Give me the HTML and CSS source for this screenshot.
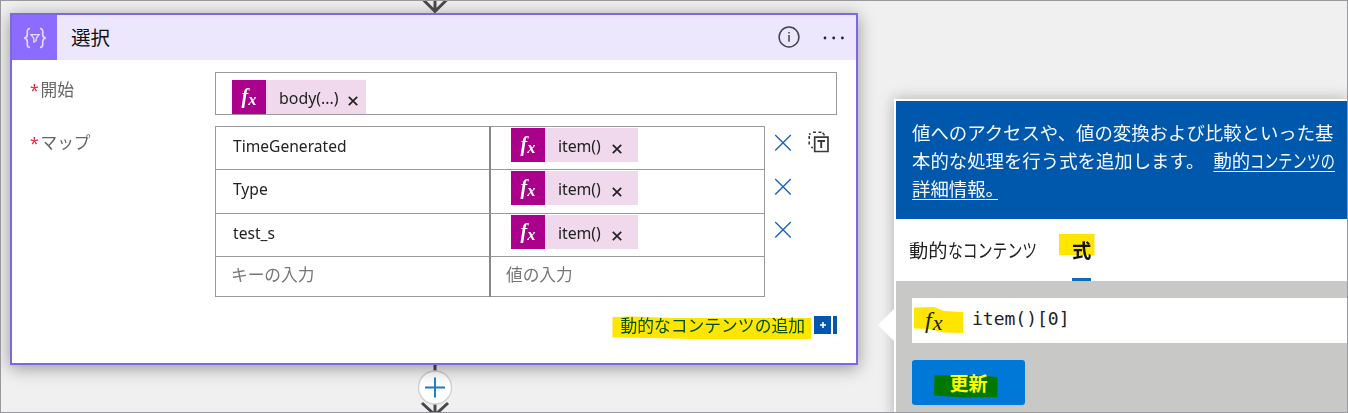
FILE: index.html
```
<!DOCTYPE html>
<html lang="ja">
<head>
<meta charset="utf-8">
<title>選択</title>
<link rel="stylesheet" href="styles.css">
</head>
<body>
<svg class="defs" width="0" height="0">
  <symbol id="cross" viewBox="0 0 18 18"><path d="M1 1L17 17M17 1L1 17" fill="none" stroke="currentColor" stroke-width="1.5"/></symbol>
  <symbol id="remove" viewBox="0 0 10 10"><path d="M.8 .8L9.2 9.2M9.2 .8L.8 9.2" fill="none" stroke="currentColor" stroke-width="1.7"/></symbol>
</svg>
<main class="canvas">
  <svg class="connector connector-top" width="28" height="13" viewBox="0 0 28 13"><path d="M14 0V10M2.500 -1L14 10.500L25.500 -1" fill="none" stroke="#484848" stroke-width="3"/></svg>
  <section class="card">
    <header class="card-head">
      <div class="card-icon">
        <svg width="24" height="22" viewBox="0 0 24 22" fill="none" stroke="#e4dcff" stroke-width="1.600"><path d="M7 1.500C4.500 1.500 4.300 2.600 4.300 4.500V7.500C4.300 9.700 3.500 10.600 1.200 11C3.500 11.400 4.300 12.300 4.300 14.500V17.500C4.300 19.400 4.500 20.500 7 20.500M17 1.500C19.500 1.500 19.700 2.600 19.700 4.500V7.500C19.700 9.700 20.500 10.600 22.800 11C20.500 11.400 19.700 12.300 19.700 14.500V17.500C19.700 19.400 19.500 20.500 17 20.500"/><path d="M8 7.700H16L13.200 11.300V13.700L10.800 15.200V11.300Z" stroke-width="1.300"/></svg>
      </div>
      <h1 class="card-title">選択</h1>
      <svg class="info" width="22" height="22" viewBox="0 0 22 22"><circle cx="11" cy="11" r="9.900" fill="none" stroke="#45424f" stroke-width="1.500"/><path d="M11 9V15.700M11 6V7.600" stroke="#45424f" stroke-width="1.500"/></svg>
      <svg class="more" width="22" height="4" viewBox="0 0 22 4" fill="#25222e"><circle cx="2" cy="2" r="1.400"/><circle cx="10.700" cy="2" r="1.400"/><circle cx="19.400" cy="2" r="1.400"/></svg>
    </header>
    <div class="form">
      <div class="label"><span class="star">*</span>開始</div>
      <div class="field">
        <span class="chip chip-body"><i class="fx">f<small>x</small></i><b>body(...)</b><svg class="chip-x"><use href="#remove"/></svg></span>
      </div>
      <div class="label label-map"><span class="star">*</span>マップ</div>
      <div class="map">
        <div class="grid">
          <div class="cell">TimeGenerated</div><div class="cell value"><span class="chip"><i class="fx">f<small>x</small></i><b>item()</b><svg class="chip-x"><use href="#remove"/></svg></span></div>
          <div class="cell">Type</div><div class="cell value"><span class="chip"><i class="fx">f<small>x</small></i><b>item()</b><svg class="chip-x"><use href="#remove"/></svg></span></div>
          <div class="cell">test_s</div><div class="cell value"><span class="chip"><i class="fx">f<small>x</small></i><b>item()</b><svg class="chip-x"><use href="#remove"/></svg></span></div>
          <div class="cell hint">キーの入力</div><div class="cell value hint">値の入力</div>
        </div>
        <div class="deletes">
          <svg><use href="#cross"/></svg><svg><use href="#cross"/></svg><svg><use href="#cross"/></svg>
        </div>
        <svg class="switch" width="21" height="22" viewBox="0 0 21 22" fill="none" stroke="#3a3a3a"><path d="M6.700 6.200H20V20.500H6.700Z" stroke-width="1.700"/><path d="M9.500 10H17M13.200 10V17" stroke-width="1.900"/><path d="M5 1.200H8M10.500 1.200H13.500M16 3V4.500M1.200 5V8M1.200 10.500V13.500M3 16.500H5M2.500 2.500L1.200 3.500M14.500 1.800L16 3" stroke-width="1.600"/></svg>
      </div>
    </div>
    <footer class="add-row"><span class="add-link">動的なコンテンツの追加<svg class="marker" width="200" height="24" viewBox="0 0 200 24"><path d="M.5 1L20 .5L60 2H199.500V23H80L40 22L.5 21.500Z" fill="#ffe600"/></svg></span>
      <svg class="add-icon" width="23" height="18" viewBox="0 0 23 18"><path d="M0 0H17V18H0ZM19 0H23V18H19Z" fill="#0457ae"/><path d="M6 9H12M9 6V12" stroke="#fff" stroke-width="1.600"/></svg>
    </footer>
  </section>
  <svg class="connector connector-bottom" width="40" height="48" viewBox="0 0 40 48"><path d="M20 0V48M7 39L20 51L33 39" fill="none" stroke="#484848" stroke-width="3"/><circle cx="20" cy="23.500" r="16.500" fill="#fff" stroke="#cfcfcf" stroke-width="1.300"/><path d="M10 23.500H30M20 13.500V33.500" stroke="#1b7bc9" stroke-width="1.900"/></svg>

  <aside class="panel">
    <svg class="pointer" width="17" height="32" viewBox="0 0 17 32"><path d="M17 0L1 16L17 32Z" fill="#fff"/></svg>
    <div class="intro">
      <div>値へのアクセスや、値の変換および比較といった基</div>
      <div>本的な処理を行う式を追加します。<a class="more-info">動的<span class="narrow">コンテンツの</span></a></div>
      <div><a>詳細情報<span class="stop">。</span></a></div>
    </div>
    <nav class="tabs"><span class="tab">動的<span class="narrow">なコンテンツ</span></span><span class="tab active">式<svg class="marker" width="36" height="22" viewBox="0 0 36 22"><path d="M0 0H35.500V21.500L15 21L0 21Z" fill="#ffe600"/></svg></span></nav>
    <div class="editor">
      <div class="expression"><i class="fx-dark">f<small>x</small></i><code>item()[0]</code><svg class="marker" width="49" height="27" viewBox="0 0 49 27"><path d="M0 .5L20 0L30 4L49 5V26L30 25.500L15 22L0 21.500Z" fill="#ffe600"/></svg></div>
      <button class="update">更新<svg class="marker" width="64" height="23" viewBox="0 0 64 23"><path d="M.5 .5L40 0L63.500 2V22L30 22.500L0 20.500Z" fill="#ffff00"/></svg></button>
    </div>
  </aside>
</main>
</body>
</html>
```
FILE: styles.css
```
* { box-sizing: border-box; }
body { margin: 0; font-family: "Noto Sans", "Noto Sans CJK JP", sans-serif; }
.defs { position: absolute; }
.canvas {
  position: relative; display: flex; align-items: flex-start;
  width: 1348px; height: 413px; overflow: hidden;
  background: #f0f0f0; border: 1px solid #99999d;
}
.connector { position: absolute; }
.connector-top { left: 419.5px; top: 0; z-index: 2; }
.connector-bottom { left: 413.5px; top: 363px; }

.card {
  position: relative; z-index: 1; flex: none;
  width: 848px; height: 352px; margin: 12px 0 0 9px;
  background: #fff; border: 2px solid #7f66e4;
  box-shadow: 0 3px 16px rgba(0, 0, 0, .38);
}
.card-head { display: flex; align-items: center; height: 45px; background: #ede7fe; }
.card-icon {
  display: flex; align-items: center; justify-content: center;
  width: 45px; height: 45px; background: #8c6cff;
}
.card-title { flex: 1; margin: 0 0 0 14px; font-size: 19.5px; line-height: 44px; font-weight: 400; color: #111; }
.info { margin: -1px 23px 0 0; }
.more { margin-right: 11px; }

.form { display: grid; grid-template-columns: 203px 622px; row-gap: 11px; padding-top: 12px; }
.label { display: flex; padding: 7px 0 0 17px; font-size: 16.7px; line-height: 22px; color: #666; }
.label-map { padding-top: 6px; }
.star { width: 11.5px; color: #e02b35; font-size: 16px; padding-left: 1px; }
.field { height: 43px; padding: 7px 16px; border: 1px solid #999; }
.map { display: flex; }
.grid {
  display: grid; grid-template-columns: 274px 276px; grid-template-rows: 43px 44px 43px 41px;
  width: 550px; height: 171px; border-right: 1px solid #999; border-bottom: 1px solid #999;
}
.cell { padding: 7px 17px 0; border-top: 1px solid #999; border-left: 1px solid #999; font-size: 15.6px; line-height: 24px; color: #222; }
.value { padding: 1px 0 0 20px; border-left: 2px solid #888; }
.hint { padding: 6px 15px 0; font-size: 16.7px; line-height: 24px; color: #777; }
.chip { display: flex; width: 127px; height: 34px; background: #f1d9ed; color: #222; font-size: 15.9px; line-height: 36px; }
.chip-body { width: 134px; }
.chip b { width: 45px; margin-left: 13px; font-weight: 400; letter-spacing: -.1px; white-space: nowrap; }
.chip-body b { width: 60px; letter-spacing: 0; }
.chip-x { width: 10px; height: 10px; margin: 15.5px 0 0 8.500px; }
.fx { width: 34px; background: #ab008b; color: #fff; text-align: center; font: italic bold 20px/32px "Liberation Serif", serif; }
.fx small { font-size: 16.5px; position: relative; top: 2px; }
.deletes { display: flex; flex-direction: column; gap: 26px; margin: 8px 0 0 8.500px; color: #2467b4; }
.deletes svg { display: block; width: 18px; height: 17.500px; }
.switch { margin: 5px 0 0 16.500px; }

.add-row { display: flex; justify-content: flex-end; padding: 18px 19px 0 0; gap: 9px; }
.add-link { position: relative; font-size: 16.8px; line-height: 22px; color: #0457ae; }
.add-link .marker { left: -8px; top: 1px; }
.add-icon { margin-top: 1px; }
.marker { position: absolute; mix-blend-mode: multiply; }

.panel {
  position: relative; flex: none; width: 454px; height: 320px; margin: 98px 0 0 36px;
  padding: 2px 0 0 2px; background: #fff; box-shadow: 0 0 14px rgba(0, 0, 0, .28);
}
.pointer { position: absolute; left: -17px; top: 210px; }
.intro { height: 118px; padding: 18px 0 0 16px; background: #0058ad; color: #f4f9ff; font-size: 18.4px; line-height: 28px; white-space: nowrap; }
.intro a { text-decoration: underline; text-underline-offset: 3px; text-decoration-thickness: 1px; }
.more-info { margin-left: 9px; }
.narrow { display: inline-block; transform: scaleX(.77); transform-origin: left; margin-right: -26px; }
.intro .narrow { text-decoration: underline; text-underline-offset: 3px; text-decoration-thickness: 1px; }
.stop { letter-spacing: -6px; }
.tabs { display: flex; height: 62px; padding-left: 13px; font-size: 19.3px; line-height: 63px; color: #222; }
.tab { width: 163px; white-space: nowrap; }
.tab.active { position: relative; width: 19px; font-weight: 700; color: #111; border-bottom: 3px solid #0f6cbd; }
.tab .marker { left: -13px; top: 15px; }
.editor { height: 140px; padding: 17px 0 0 16px; background: #c8c9c7; }
.expression { position: relative; display: flex; height: 45px; background: #fff; }
.expression .marker { left: 2px; top: 9px; }
.fx-dark { width: 60px; padding-left: 13px; color: #222; font: italic 24px/45px "Liberation Serif", serif; }
.fx-dark small { font-size: 22px; position: relative; top: 2px; left: 1px; }
code { font: 18px/42px "DejaVu Sans Mono", monospace; color: #222; }
.update {
  position: relative; display: block; width: 113px; height: 45px; margin-top: 17px; padding: 0;
  border: 0; border-radius: 3px; background: #0078d7; color: #fff;
  font: 700 19px/44px "Noto Sans CJK JP", sans-serif;
}
.update .marker { left: 22px; top: 15px; }
```
